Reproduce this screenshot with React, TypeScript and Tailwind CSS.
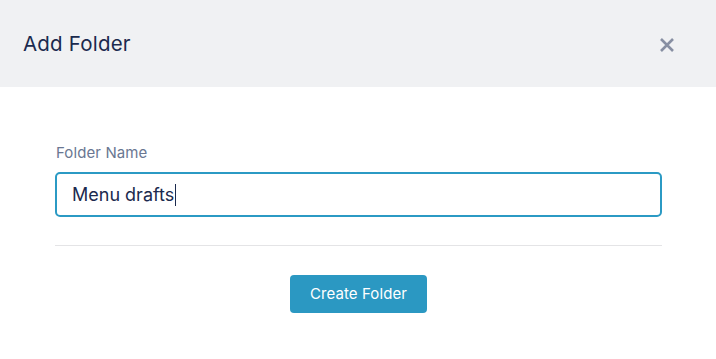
export default function App() {
  return (
    <div className="w-[716px] h-[359px] bg-white font-['Inter',sans-serif] overflow-hidden">
      {/* Header */}
      <div className="h-[87px] bg-[#f0f1f3] flex items-center justify-between pl-[23px] pr-[41px] pt-[2px]">
        <h2 className="text-[20.5px] text-[#1b2a4e] tracking-[0.2px]">Add Folder</h2>
        <button className="text-[#878fa2]" aria-label="Close">
          <svg width="16" height="16" viewBox="0 0 16 16" fill="none">
            <path d="M2 2L14 14M14 2L2 14" stroke="currentColor" strokeWidth="2.6" strokeLinecap="butt" />
          </svg>
        </button>
      </div>

      {/* Body */}
      <div className="px-[55px] pt-[56px]">
        <label className="block text-[15px] text-[#6a7792] mb-[9px] leading-[20px] pl-[1px] tracking-[0.1px]">Folder Name</label>
        <div className="h-[45px] w-[607px] border-2 border-[#2b9ac4] rounded-[5px] flex items-center pl-[15px]">
          <span className="text-[18px] text-[#1b2a4e] leading-none">Menu drafts</span>
          <span className="w-[1px] h-[22px] bg-[#1b2a4e] ml-[1px]" />
        </div>
        <div className="h-px bg-[#e4e4e6] w-[607px] mt-[28px]" />
        <div className="flex justify-center mt-[29px] w-[607px]">
          <button className="h-[38px] w-[137px] bg-[#2b98c2] rounded-[4px] text-white text-[15px] tracking-[0.1px]">
            Create Folder
          </button>
        </div>
      </div>
    </div>
  );
}
